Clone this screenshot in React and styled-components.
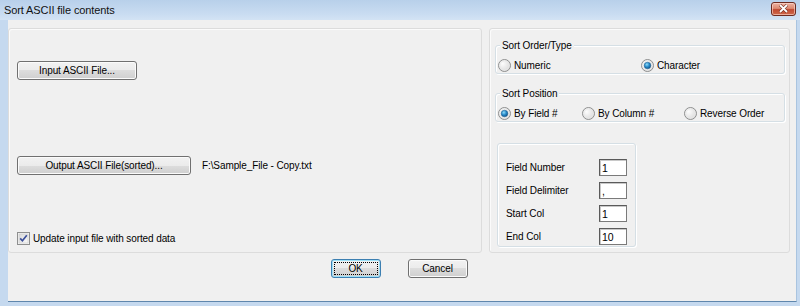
import React from 'react';
import styled, { createGlobalStyle } from 'styled-components';

const Global = createGlobalStyle`
  html, body { margin: 0; padding: 0; background: #c5d9ef; }
  body { font-family: "Liberation Sans", Arial, sans-serif; font-size: 10px; color: #000; }
  * { box-sizing: border-box; }
`;

const Window = styled.div`
  width: 800px;
  height: 306px;
  display: flex;
  flex-direction: column;
  background: #c5d9ef;
`;

const TitleBar = styled.div`
  height: 20px;
  flex: none;
  display: flex;
  align-items: center;
  justify-content: space-between;
  padding: 0 4px 0 4px;
  background: linear-gradient(#b8d0ea, #c9dcf1 70%, #d3e3f4);
`;

const Title = styled.span`
  font-size: 11px;
  color: #111;
  letter-spacing: -0.1px;
`;

const CloseButton = styled.div`
  width: 25px;
  height: 14px;
  margin-top: -3px;
  border: 1px solid #6d2b20;
  border-radius: 3px;
  background: linear-gradient(#eeb2a2 0%, #dc8a72 45%, #c14a32 55%, #cf6a4c 100%);
  box-shadow: inset 0 0 0 1px rgba(255, 220, 210, 0.6);
  display: flex;
  align-items: center;
  justify-content: center;
`;

const Frame = styled.div`
  flex: 1;
  display: flex;
  padding: 0 4px 4px 8px;
`;

const Body = styled.div`
  flex: 1;
  display: flex;
  flex-direction: column;
  background: #f0f0f0;
  padding: 8px 6px 0 0;
  border-bottom: 1px solid #5f87ad;
  border-right: 1px solid #a9c4e0;
`;

const Main = styled.div`
  display: flex;
  gap: 7px;
`;

const Panel = styled.div`
  border: 1px solid #dcdcdc;
  border-radius: 3px;
  box-shadow: inset 1px 1px 0 #fbfbfb;
  display: flex;
  flex-direction: column;
  width: ${p => p.$w}px;
  padding: ${p => p.$pad};
`;

const Row = styled.div`
  display: flex;
  align-items: center;
  margin-top: ${p => p.$mt || 0}px;
`;

const Button = styled.button`
  font-family: inherit;
  font-size: 10px;
  color: #000;
  letter-spacing: -0.1px;
  width: ${p => p.$w}px;
  height: 19px;
  padding: 0;
  border: 1px solid ${p => (p.$focused ? '#3c7fb1' : '#707070')};
  border-radius: 3px;
  background: linear-gradient(#f2f2f2 0%, #ebebeb 50%, #dddddd 50%, #cfcfcf 100%);
  box-shadow: inset 0 0 0 1px ${p => (p.$focused ? '#9fe2f9' : '#fbfbfb')};
  outline: ${p => (p.$focused ? '1px dotted #000' : 'none')};
  outline-offset: -4px;
`;

const PathText = styled.span`
  margin-left: 11px;
  letter-spacing: -0.1px;
`;

const CheckLabel = styled.span`
  margin-left: 3px;
  letter-spacing: -0.1px;
`;

const GroupBox = styled.div`
  position: relative;
  border: 1px solid #d5dfe5;
  border-radius: 3px;
  box-shadow: inset 1px 1px 0 #fff, 1px 1px 0 #fff;
  padding: 13px 0 1px 2px;
  margin-top: ${p => p.$mt || 0}px;
  display: flex;
`;

const Caption = styled.span`
  position: absolute;
  top: -7px;
  left: 4px;
  padding: 0 2px;
  line-height: 13px;
  background: #f0f0f0;
  letter-spacing: -0.1px;
`;

const RadioItem = styled.label`
  display: flex;
  align-items: center;
  width: ${p => p.$w}px;
  height: 13px;
  gap: 3px;
  letter-spacing: -0.1px;
`;

const FieldBox = styled.div`
  margin: 21px 0 0 2px;
  width: 139px;
  border: 1px solid #d5dfe5;
  border-radius: 3px;
  box-shadow: inset 1px 1px 0 #fff, 1px 1px 0 #fff;
  padding: 15px 8px 1px 8px;
  display: grid;
  grid-template-columns: 93px 28px;
  row-gap: 6px;
  align-items: center;
`;

const FieldLabel = styled.span`
  letter-spacing: -0.1px;
`;

const TextBox = styled.input`
  width: 28px;
  height: 17px;
  padding: 0 2px;
  font-family: inherit;
  font-size: 10.5px;
  color: #000;
  background: #fff;
  border: 1px solid #7a7a7a;
  border-top-color: #5a5a5a;
  border-left-color: #5a5a5a;
  box-shadow: inset 1px 1px 0 #c8c8c8;
  outline: none;
`;

const ButtonRow = styled.div`
  display: flex;
  justify-content: center;
  gap: 27px;
  margin-top: 6px;
`;

function Radio({ checked }) {
  return (
    <svg width="13" height="13" viewBox="0 0 13 13">
      <defs>
        <radialGradient id="rOuter" cx="0.35" cy="0.35" r="0.8">
          <stop offset="0" stopColor="#fdfdfd" />
          <stop offset="1" stopColor="#d4d4d4" />
        </radialGradient>
        <radialGradient id="rDot" cx="0.4" cy="0.35" r="0.7">
          <stop offset="0" stopColor="#8fdcf8" />
          <stop offset="0.5" stopColor="#2a8ccb" />
          <stop offset="1" stopColor="#0b4f86" />
        </radialGradient>
      </defs>
      <circle cx="6.5" cy="6.5" r="6" fill="url(#rOuter)" stroke="#8e8f8f" />
      <circle cx="6.5" cy="6.5" r="4.6" fill="none" stroke="#e8e8e8" strokeWidth="0.8" />
      {checked && <circle cx="6.5" cy="6.5" r="3.3" fill="url(#rDot)" stroke="#1b5d8f" strokeWidth="0.5" />}
    </svg>
  );
}

function Checkbox() {
  return (
    <svg width="13" height="13" viewBox="0 0 13 13">
      <defs>
        <linearGradient id="cb" x1="0" y1="0" x2="1" y2="1">
          <stop offset="0" stopColor="#d8d8d8" />
          <stop offset="1" stopColor="#fbfbfb" />
        </linearGradient>
      </defs>
      <rect x="0.5" y="0.5" width="12" height="12" fill="#f4f4f4" stroke="#8e8f8f" />
      <rect x="2" y="2" width="9" height="9" fill="url(#cb)" stroke="#c9c9c9" strokeWidth="0.6" />
      <path d="M3.2 6.4 L5.4 8.8 L9.8 3.2" fill="none" stroke="#3b4f9a" strokeWidth="1.7" />
    </svg>
  );
}

export default function App() {
  return (
    <>
      <Global />
      <Window>
        <TitleBar>
          <Title>Sort ASCII file contents</Title>
          <CloseButton>
            <svg width="11" height="9" viewBox="0 0 11 9">
              <path d="M2 1 L9 8 M9 1 L2 8" stroke="#6b2a1e" strokeWidth="3" />
              <path d="M2 1 L9 8 M9 1 L2 8" stroke="#fff" strokeWidth="1.8" />
            </svg>
          </CloseButton>
        </TitleBar>
        <Frame>
          <Body>
            <Main>
              <Panel $w={474} $pad="32px 8px 7px 8px">
                <Row>
                  <Button $w={120}>Input ASCII File...</Button>
                </Row>
                <Row $mt={76}>
                  <Button $w={174}>Output ASCII File(sorted)...</Button>
                  <PathText>F:\Sample_File - Copy.txt</PathText>
                </Row>
                <Row $mt={57}>
                  <Checkbox />
                  <CheckLabel>Update input file with sorted data</CheckLabel>
                </Row>
              </Panel>
              <Panel $w={301} $pad="16px 4px 4px 5px">
                <GroupBox>
                  <Caption>Sort Order/Type</Caption>
                  <RadioItem $w={143}><Radio /> Numeric</RadioItem>
                  <RadioItem $w={120}><Radio checked /> Character</RadioItem>
                </GroupBox>
                <GroupBox $mt={19}>
                  <Caption>Sort Position</Caption>
                  <RadioItem $w={84}><Radio checked /> By Field #</RadioItem>
                  <RadioItem $w={102}><Radio /> By Column #</RadioItem>
                  <RadioItem $w={100}><Radio /> Reverse Order</RadioItem>
                </GroupBox>
                <FieldBox>
                  <FieldLabel>Field Number</FieldLabel>
                  <TextBox readOnly value="1" />
                  <FieldLabel>Field Delimiter</FieldLabel>
                  <TextBox readOnly value="," />
                  <FieldLabel>Start Col</FieldLabel>
                  <TextBox readOnly value="1" />
                  <FieldLabel>End Col</FieldLabel>
                  <TextBox readOnly value="10" />
                </FieldBox>
              </Panel>
            </Main>
            <ButtonRow>
              <Button $w={50} $focused>OK</Button>
              <Button $w={60}>Cancel</Button>
            </ButtonRow>
          </Body>
        </Frame>
      </Window>
    </>
  );
}
